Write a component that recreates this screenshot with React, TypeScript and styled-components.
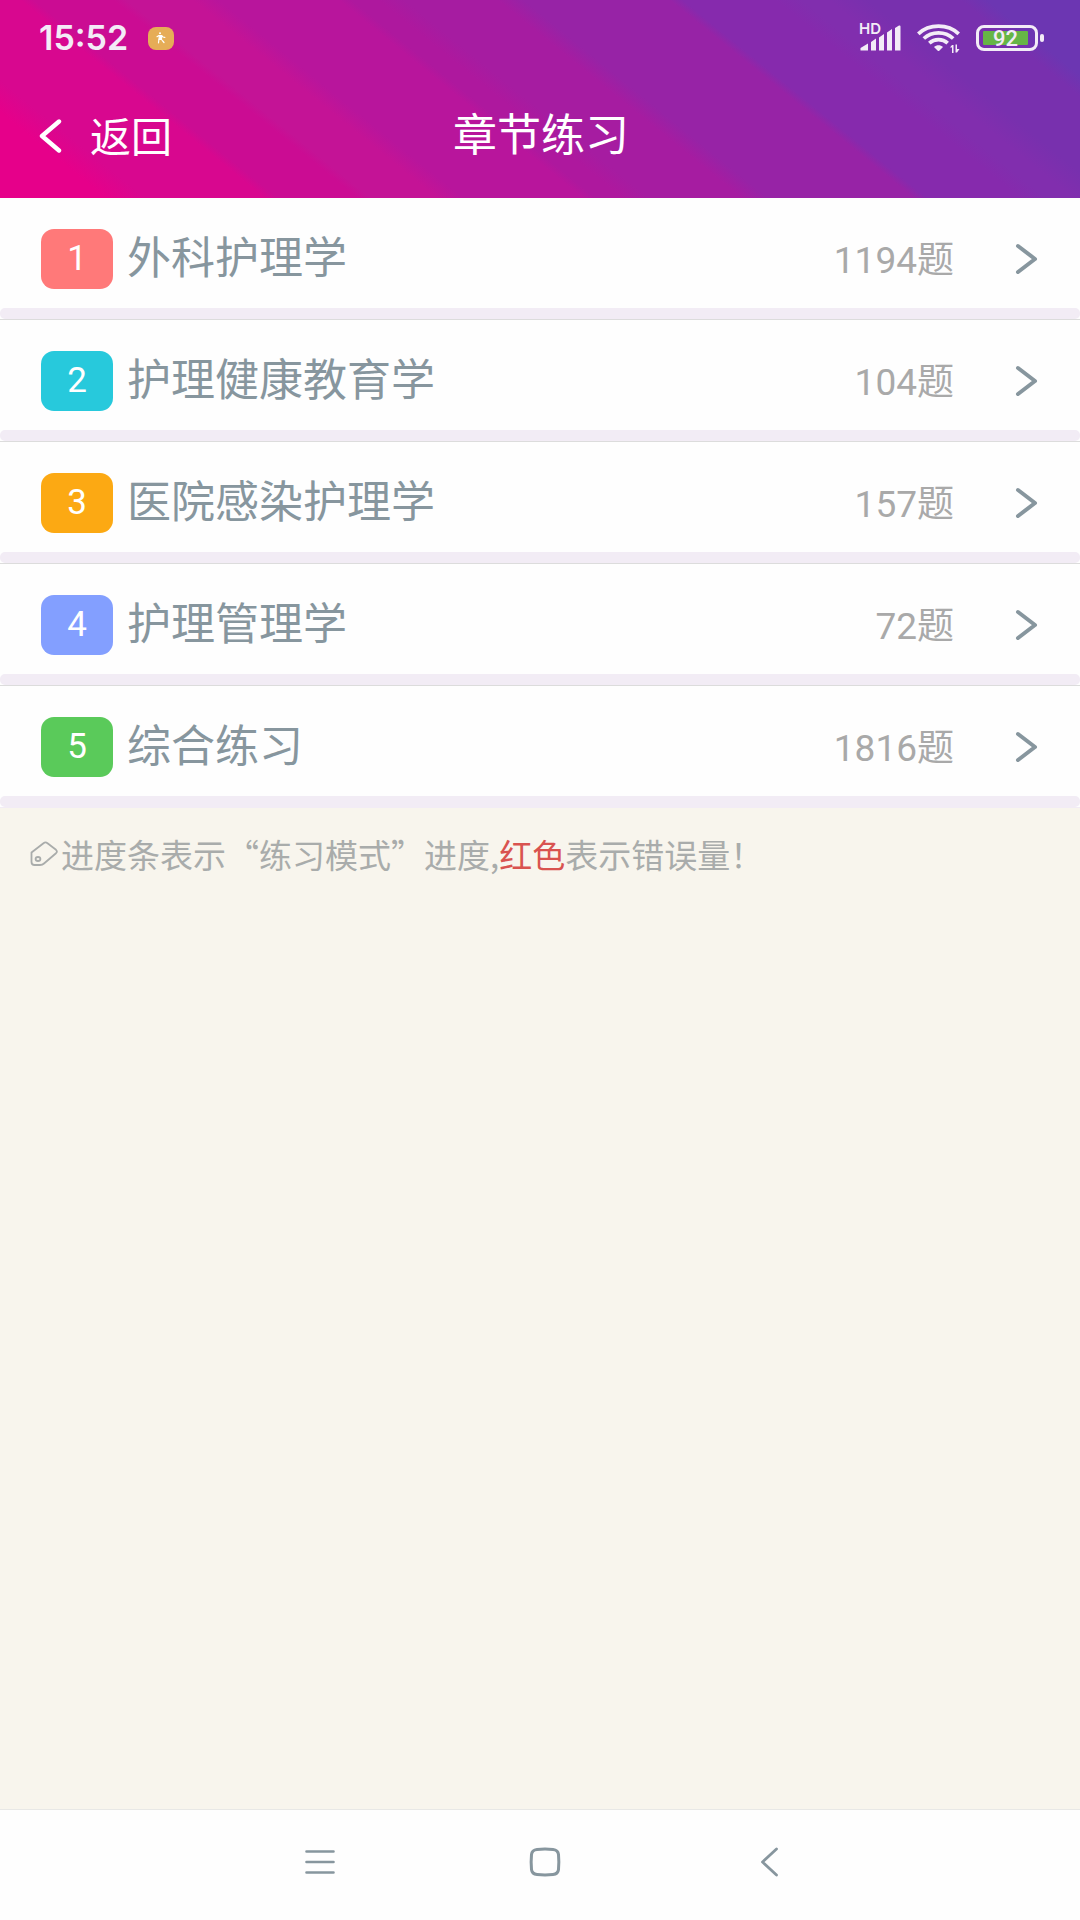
import React from "react";
import styled, { createGlobalStyle } from "styled-components";

const GlobalStyle = createGlobalStyle`
  *, *::before, *::after { box-sizing: border-box; }
  body {
    margin: 0;
    background: #f8f5ed;
    font-family: Roboto, "Noto Sans CJK SC", sans-serif;
  }
  svg { display: block; flex: none; }
`;

const PlainButton = styled.button`
  display: flex;
  align-items: center;
  padding: 0;
  border: 0;
  background: none;
  color: inherit;
  font: inherit;
  cursor: pointer;
`;

const Page = styled.div`
  display: flex;
  flex-direction: column;
  min-height: 100vh;
`;

const Header = styled.header`
  height: 198px;
  color: #fff;
  background: linear-gradient(
    39deg,
    #e6008a 0 8%, #d8078f 11% 20%, #cb0c93 21% 27%, #c41396 28% 33%,
    #b8159c 35% 44%, #ae189e 45% 47%, #a61ca1 49% 56%, #9723a6 58% 69%,
    #862aad 70% 77%, #812eae 79% 81%, #7830ae 84% 91%, #6c36b2 93%
  );
`;

const StatusBar = styled.div`
  display: flex;
  align-items: center;
  height: 76px;
  padding: 0 36px 0 39px;
  color: #f3ecf7;
`;

const Clock = styled.time`
  font: 600 34px/40px Inter, sans-serif;
`;

const AppBadge = styled.span`
  display: flex;
  align-items: center;
  justify-content: center;
  width: 26px;
  height: 23px;
  margin-left: 20px;
  border-radius: 8px;
  background: #e6ad57;
`;

const StatusIcons = styled.div`
  display: flex;
  align-items: center;
  gap: 16px;
  margin-left: auto;
`;

const Signal = styled.div`
  position: relative;
`;

const SignalLabel = styled.span`
  position: absolute;
  left: -1px;
  top: -4px;
  font: 600 15px/15px Inter, sans-serif;
`;

const Battery = styled.div`
  display: flex;
  align-items: center;
  gap: 2px;
  &::after {
    content: "";
    width: 4px;
    height: 8px;
    border-radius: 2px;
    background: currentColor;
  }
`;

const BatteryCase = styled.div`
  width: 62px;
  height: 26px;
  padding: 3px 7px 3px 4px;
  border: 3px solid currentColor;
  border-radius: 8px;
`;

const BatteryLevel = styled.div`
  height: 14px;
  border-radius: 1px;
  background: #66b546;
  text-align: center;
  font: 500 22px/16px Roboto, sans-serif;
`;

const TitleBar = styled.div`
  display: grid;
  grid-template-columns: 1fr auto 1fr;
  align-items: start;
  padding: 0 36px 0 38px;
`;

const BackButton = styled(PlainButton)`
  justify-self: start;
  gap: 28px;
  padding-top: 32px;
  font-size: 41px;
  line-height: 60px;

  svg { margin-bottom: 4px; }
`;

const Title = styled.h1`
  margin: 0;
  padding-top: 30px;
  font-size: 44px;
  line-height: 60px;
  font-weight: 400;
`;

const ChapterList = styled.ul`
  margin: 0;
  padding: 0;
  list-style: none;
  background: #fefefe;
`;

const Chapter = styled.li`
  border-bottom: 1px solid #dcdcdc;
  &:last-child { border-bottom-color: #f2ecf5; }
`;

const ChapterButton = styled(PlainButton)`
  width: 100%;
  height: 110px;
  padding: 12px 42px 0 41px;
  text-align: left;
`;

const NumberBadge = styled.span<{ $color: string }>`
  width: 72px;
  height: 60px;
  border-radius: 13px;
  background: ${(p) => p.$color};
  color: #fff;
  font-size: 35px;
  line-height: 60px;
  text-align: center;
`;

const ChapterName = styled.span`
  flex: 1;
  margin-left: 14px;
  color: #87969e;
  font-size: 44px;
  line-height: 60px;
`;

const Count = styled.span`
  margin-right: 61px;
  padding-top: 4px;
  color: #a9a9a9;
  font-size: 37px;
  line-height: 56px;
`;

const Progress = styled.div`
  height: 11px;
  border-radius: 5px;
  background: #f2ecf5;
`;

const Hint = styled.p`
  display: flex;
  align-items: center;
  gap: 3px;
  margin: 0;
  padding: 22px 30px;
  color: #a9acab;
  font: 400 33px/48px "Noto Sans CJK SC", sans-serif;
`;

const Wrong = styled.em`
  color: #d9534f;
  font-style: normal;
`;

const SystemNav = styled.nav`
  display: grid;
  grid-template-columns: repeat(3, 1fr);
  height: 111px;
  margin-top: auto;
  padding: 0 198px 6px 207px;
  border-top: 1px solid #e8e8e6;
  background: #fefefe;
  color: #87969e;
`;

const NavButton = styled(PlainButton)`
  justify-content: center;
`;

const chapters = [
  { name: "外科护理学", count: 1194, color: "#ff7979" },
  { name: "护理健康教育学", count: 104, color: "#27c9dc" },
  { name: "医院感染护理学", count: 157, color: "#fca913" },
  { name: "护理管理学", count: 72, color: "#839fff" },
  { name: "综合练习", count: 1816, color: "#5aca5a" },
];

const stroke = { fill: "none", stroke: "currentColor", strokeLinecap: "round", strokeLinejoin: "round" } as const;

const RunnerIcon = () => (
  <svg width="10" height="12" viewBox="0 0 10 12" {...stroke} stroke="#fff" strokeWidth="1.2">
    <circle cx="4" cy="1.3" r="1" fill="#fff" stroke="none" />
    <path d="M1 4.700 3 3.500h2.500L7 5l1.800.3M3 6.800 2.500 10.800M5.500 7.500l1.200 1.500L8 10.500" />
    <path d="M3.200 3.500h2.300v4H3.200Z" fill="#fff" />
  </svg>
);

const SignalIcon = () => (
  <svg width="41" height="26" viewBox="0 0 41 26" fill="currentColor">
    <path d="M.5 25.500v-2.500L8 18.500v7zM11 25.500V17l5-3.500v12zM19 25.500V12.500l5-3.500v16.500zM27 25.500V7.500l5-3.500v21.500zM35 25.500V3l4-2.500q1.500-.5 1.500 1v24z" />
  </svg>
);

const WifiIcon = () => (
  <svg width="43" height="29" viewBox="0 0 43 29" {...stroke} strokeLinecap="butt" strokeWidth="3.700">
    <path d="M1.300 9.800C12-.5 31-.5 41.700 9.800M6.800 14.500c8-7.500 21.400-7.500 29.400 0M12.300 19.200c5.200-4.800 13.200-4.800 18.400 0" />
    <path d="m17 23 3.500 3.500q1 1 2 0L26 23c-2.500-2.300-6.500-2.300-9 0Z" fill="currentColor" stroke="none" />
    <path d="M33 23.500 35 21h1.500v8H35v-5.500ZM38.500 20.500H40V25h2.500L40 28.500h-1.500Z" fill="currentColor" stroke="none" />
  </svg>
);

const BackIcon = () => (
  <svg width="24" height="34" viewBox="0 0 24 34" {...stroke} strokeWidth="4.400">
    <path d="M21 2.500 4 17l17 14.500" />
  </svg>
);

const NextIcon = () => (
  <svg width="23" height="32" viewBox="0 0 23 32" {...stroke} stroke="#87969e" strokeWidth="4">
    <path d="m3 3 17 13L3 29" />
  </svg>
);

const TagIcon = () => (
  <svg width="28" height="26" viewBox="0 0 28 26" {...stroke} strokeWidth="1.800">
    <path d="M1.500 11.500 13.500 2.200q2-1.500 4 0l8.500 6.600q1.800 1.700 0 3.400L14 22.500q-1.500 1.500-4 1.500H4.500Q1.500 24 1.500 21Z" />
    <ellipse cx="8" cy="18" rx="2.400" ry="2" />
  </svg>
);

export default function App() {
  return (
    <Page>
      <GlobalStyle />
      <Header>
        <StatusBar>
          <Clock>15:52</Clock>
          <AppBadge><RunnerIcon /></AppBadge>
          <StatusIcons>
            <Signal>
              <SignalLabel>HD</SignalLabel>
              <SignalIcon />
            </Signal>
            <WifiIcon />
            <Battery>
              <BatteryCase><BatteryLevel>92</BatteryLevel></BatteryCase>
            </Battery>
          </StatusIcons>
        </StatusBar>
        <TitleBar>
          <BackButton type="button"><BackIcon />返回</BackButton>
          <Title>章节练习</Title>
        </TitleBar>
      </Header>
      <main>
        <ChapterList>
          {chapters.map((c, i) => (
            <Chapter key={c.name}>
              <ChapterButton type="button">
                <NumberBadge $color={c.color}>{i + 1}</NumberBadge>
                <ChapterName>{c.name}</ChapterName>
                <Count>{c.count}题</Count>
                <NextIcon />
              </ChapterButton>
              <Progress />
            </Chapter>
          ))}
        </ChapterList>
        <Hint>
          <TagIcon />
          <span>进度条表示“练习模式”进度,<Wrong>红色</Wrong>表示错误量！</span>
        </Hint>
      </main>
      <SystemNav aria-label="系统导航">
        <NavButton type="button" aria-label="菜单">
          <svg width="30" height="26" viewBox="0 0 30 26" {...stroke} strokeWidth="2.600">
            <path d="M1.500 2.500h27M1.500 13h27M1.500 23.500h27" />
          </svg>
        </NavButton>
        <NavButton type="button" aria-label="主页">
          <svg width="32" height="30" viewBox="0 0 32 30" {...stroke} strokeWidth="3">
            <path d="M8 2.500Q16 1.700 24 2.500 29 3 29.500 7.500 30.200 15 29.500 22.500 29 27 24 27.500 16 28.300 8 27.500 3 27 2.500 22.500 1.800 15 2.500 7.500 3 3 8 2.500Z" />
          </svg>
        </NavButton>
        <NavButton type="button" aria-label="返回">
          <svg width="19" height="30" viewBox="0 0 19 30" {...stroke} strokeWidth="2.800">
            <path d="M16.500 2 2.500 15l14 13" />
          </svg>
        </NavButton>
      </SystemNav>
    </Page>
  );
}
